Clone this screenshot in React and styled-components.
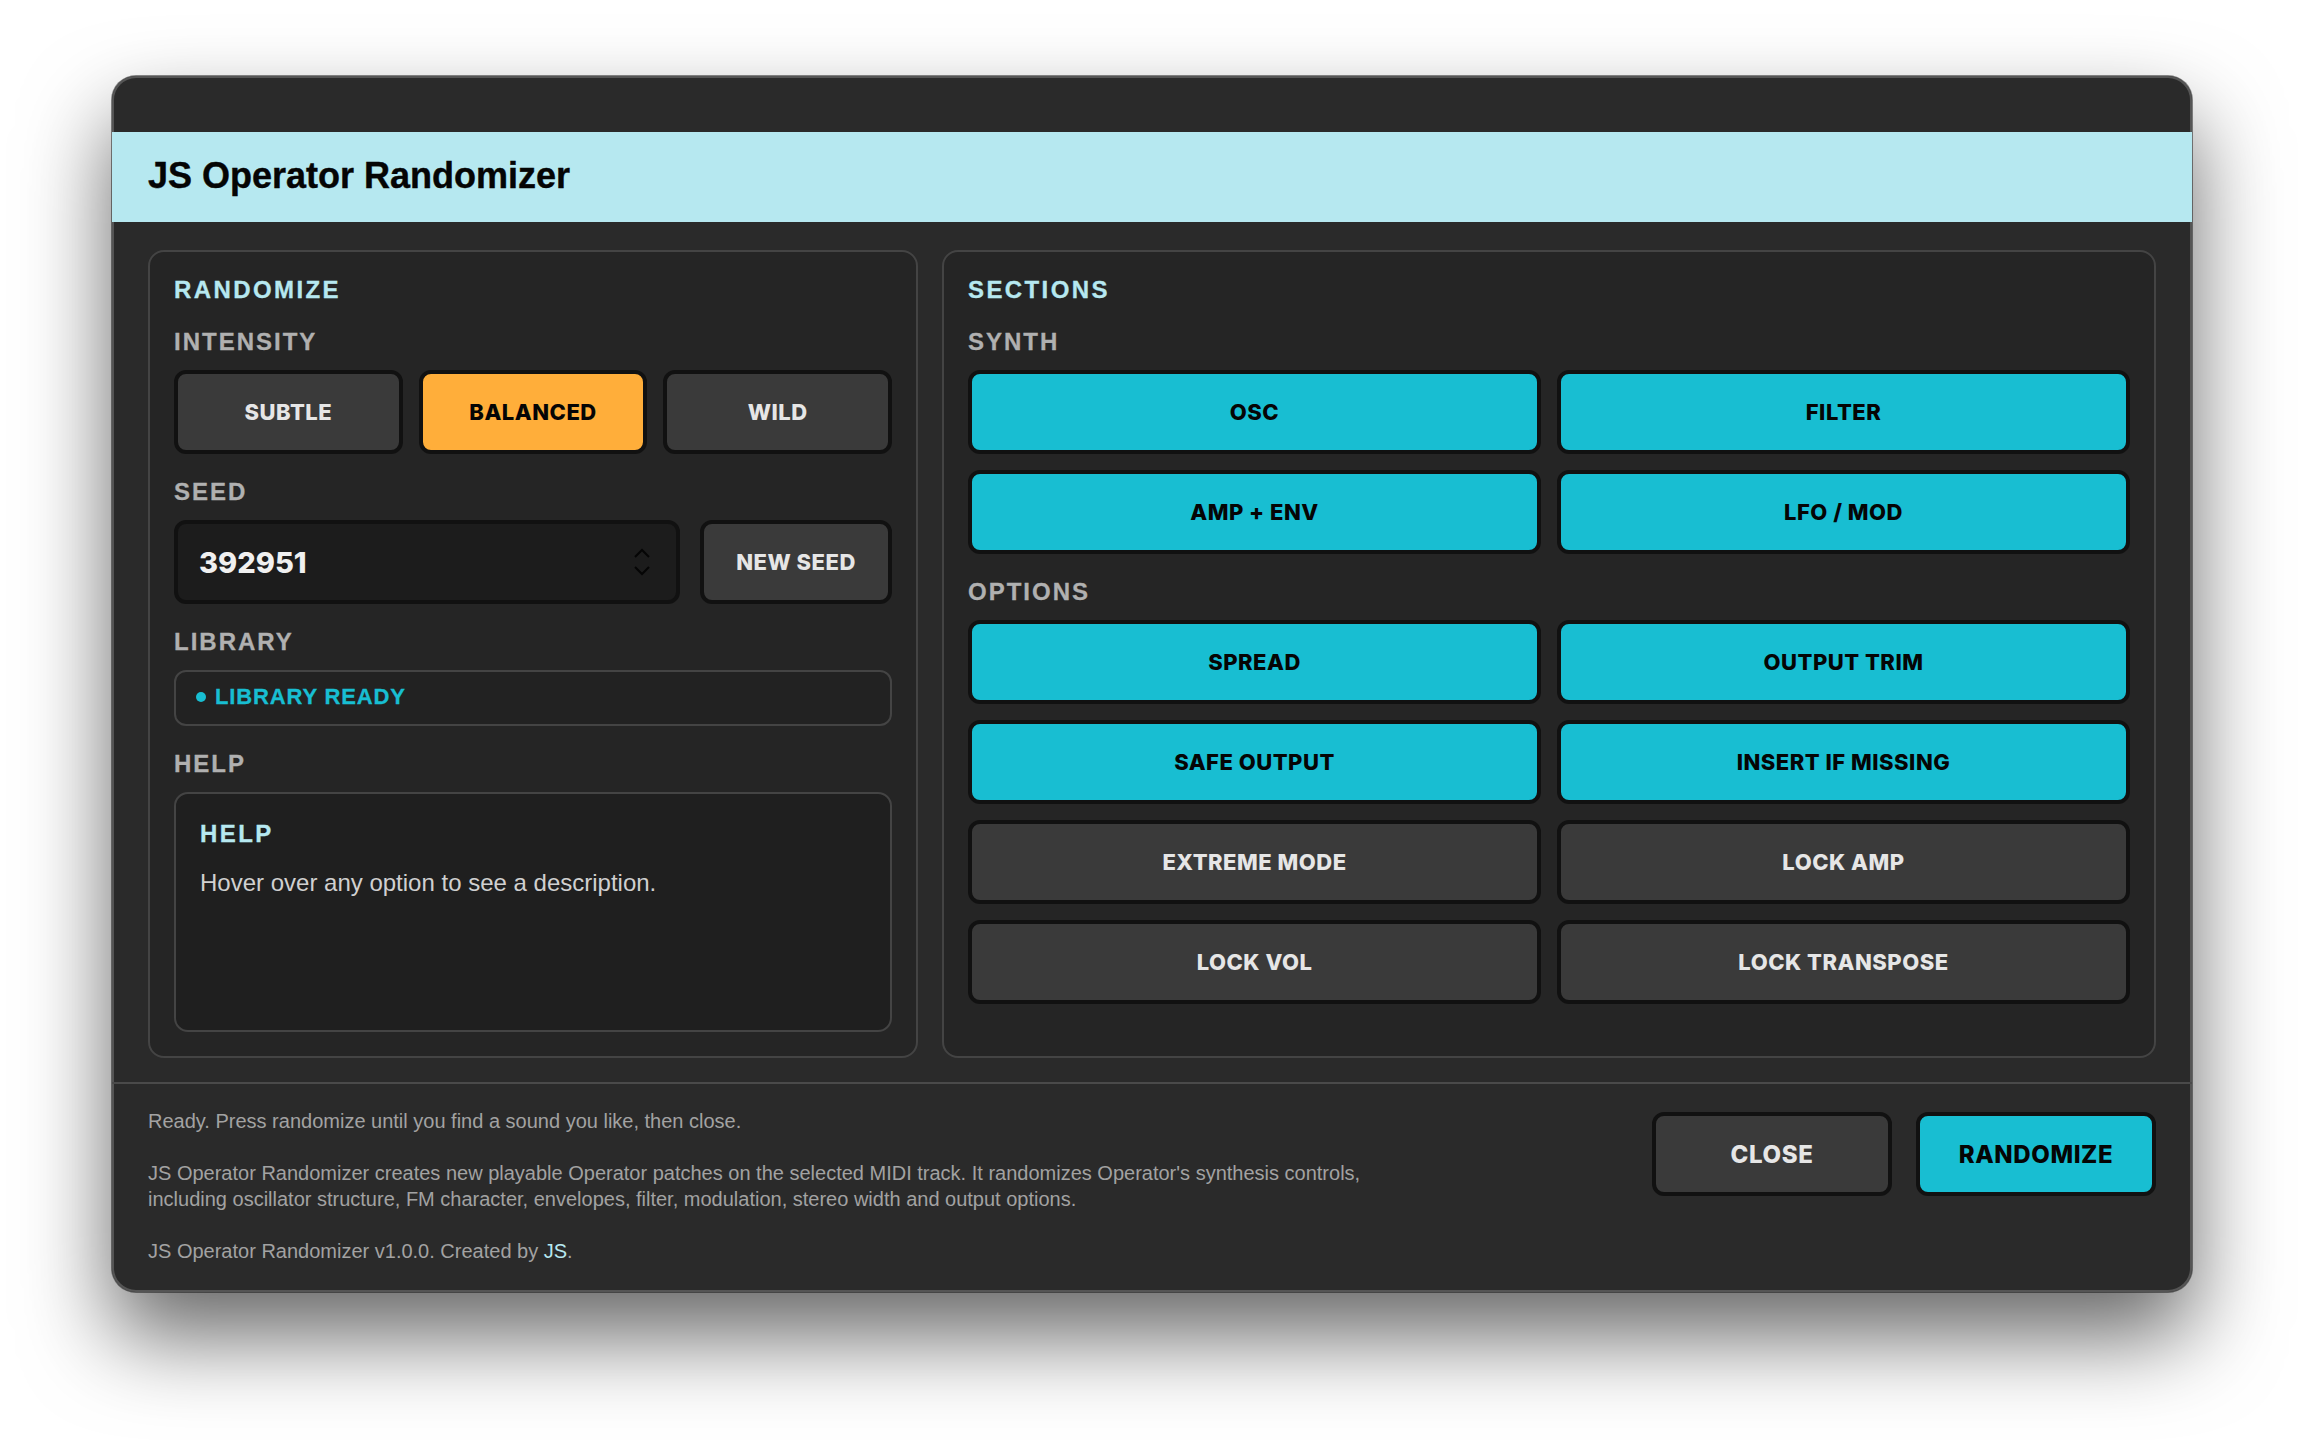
import React from 'react';
import styled, { createGlobalStyle } from 'styled-components';

const sections = ['OSC', 'FILTER', 'AMP + ENV', 'LFO / MOD'];
const options = [
  { name: 'SPREAD', on: true },
  { name: 'OUTPUT TRIM', on: true },
  { name: 'SAFE OUTPUT', on: true },
  { name: 'INSERT IF MISSING', on: true },
  { name: 'EXTREME MODE' },
  { name: 'LOCK AMP' },
  { name: 'LOCK VOL' },
  { name: 'LOCK TRANSPOSE' },
];

function App() {
  return (
    <>
      <GlobalStyle />
      <Page>
        <Window>
          <TitleStrip />
          <Header>JS Operator Randomizer</Header>
          <Body>
            <Panel>
              <PanelTitle>RANDOMIZE</PanelTitle>
              <Label>INTENSITY</Label>
              <IntensityRow>
                <ToggleButton>SUBTLE</ToggleButton>
                <ToggleButton $variant="orange">BALANCED</ToggleButton>
                <ToggleButton>WILD</ToggleButton>
              </IntensityRow>
              <Label>SEED</Label>
              <SeedRow>
                <SeedInput>
                  <span>392951</span>
                  <Spinner viewBox="0 0 16 28" fill="none">
                    <path d="M1 9l7-7 7 7M1 19l7 7 7-7" stroke="#050505" strokeWidth="2" />
                  </Spinner>
                </SeedInput>
                <ToggleButton>NEW SEED</ToggleButton>
              </SeedRow>
              <Label>LIBRARY</Label>
              <Status>
                <Dot />
                LIBRARY READY
              </Status>
              <Label>HELP</Label>
              <HelpBox>
                <HelpTitle>HELP</HelpTitle>
                <HelpText>Hover over any option to see a description.</HelpText>
              </HelpBox>
            </Panel>
            <Panel>
              <PanelTitle>SECTIONS</PanelTitle>
              <Label>SYNTH</Label>
              <ToggleGrid>
                {sections.map((name) => (
                  <ToggleButton key={name} $variant="cyan">
                    {name}
                  </ToggleButton>
                ))}
              </ToggleGrid>
              <Label>OPTIONS</Label>
              <ToggleGrid>
                {options.map((o) => (
                  <ToggleButton key={o.name} $variant={o.on ? 'cyan' : undefined}>
                    {o.name}
                  </ToggleButton>
                ))}
              </ToggleGrid>
            </Panel>
          </Body>
          <Footer>
            <FooterText>
              <FooterLine>Ready. Press randomize until you find a sound you like, then close.</FooterLine>
              <FooterLine>
                JS Operator Randomizer creates new playable Operator patches on the selected MIDI track. It
                randomizes Operator's synthesis controls, including oscillator structure, FM character, envelopes,
                filter, modulation, stereo width and output options.
              </FooterLine>
              <FooterLine>
                JS Operator Randomizer v1.0.0. Created by <FooterLink>JS</FooterLink>.
              </FooterLine>
            </FooterText>
            <FooterButtons>
              <FooterButton>CLOSE</FooterButton>
              <FooterButton $variant="cyan">RANDOMIZE</FooterButton>
            </FooterButtons>
          </Footer>
        </Window>
      </Page>
    </>
  );
}

export default App;

const GlobalStyle = createGlobalStyle`
  html, body {
    margin: 0;
    padding: 0;
    background: #fff;
  }
  * {
    box-sizing: border-box;
  }
`;

const Page = styled.div`
  width: 2304px;
  height: 1440px;
  padding: 76px 112px 148px;
  background: #fff;
  overflow: hidden;
`;

const Window = styled.div`
  display: flex;
  flex-direction: column;
  height: 1216px;
  background: #2a2a2a;
  border-radius: 24px;
  overflow: hidden;
  box-shadow: inset 0 0 0 2px #555, 0 0 0 1px rgba(0, 0, 0, 0.45), 0 44px 88px rgba(0, 0, 0, 0.6);
`;

const TitleStrip = styled.div`
  height: 56px;
  flex: none;
`;

const Header = styled.div`
  display: flex;
  align-items: center;
  height: 90px;
  flex: none;
  padding: 0 0 3px 36px;
  background: #b6e8f0;
  color: #050505;
  font: 700 36px 'Liberation Sans', Arial, sans-serif;
  -webkit-text-stroke: 0.4px #050505;
`;

const Body = styled.div`
  display: grid;
  grid-template-columns: 770px 1214px;
  gap: 24px;
  padding: 28px 36px 24px;
  height: 860px;
  flex: none;
`;

const Panel = styled.section`
  display: flex;
  flex-direction: column;
  padding: 24px;
  background: #252525;
  border: 2px solid #444;
  border-radius: 16px;
`;

const PanelTitle = styled.div`
  height: 26px;
  margin-bottom: 26px;
  color: #b6e8f0;
  font: 700 24px/28px 'Liberation Sans', Arial, sans-serif;
  letter-spacing: 2.4px;
  -webkit-text-stroke: 0.3px #b6e8f0;
`;

const Label = styled.div`
  height: 26px;
  margin-bottom: 16px;
  color: #b0b0b0;
  font: 700 24px/28px 'Liberation Sans', Arial, sans-serif;
  letter-spacing: 2px;
  -webkit-text-stroke: 0.3px #b0b0b0;
`;

const IntensityRow = styled.div`
  display: grid;
  grid-template-columns: repeat(3, 1fr);
  gap: 16px;
  margin-bottom: 24px;
`;

const ToggleButton = styled.div`
  display: flex;
  align-items: center;
  justify-content: center;
  height: 84px;
  border: 4px solid #111;
  border-radius: 12px;
  background: ${(p) => (p.$variant === 'cyan' ? '#18bed2' : p.$variant === 'orange' ? '#ffae3a' : '#3a3a3a')};
  color: ${(p) => (p.$variant ? '#050505' : '#e6e6e6')};
  font: 800 22px Inter, sans-serif;
  letter-spacing: 0.5px;
`;

const SeedRow = styled.div`
  display: grid;
  grid-template-columns: 506px 192px;
  gap: 20px;
  margin-bottom: 24px;
`;

const SeedInput = styled.div`
  display: flex;
  align-items: center;
  justify-content: space-between;
  height: 84px;
  padding: 0 26px 0 21px;
  background: #1c1c1c;
  border: 4px solid #111;
  border-radius: 12px;
  color: #f0f0f0;
  font: 800 29px Inter, sans-serif;
`;

const Spinner = styled.svg`
  width: 16px;
  height: 28px;
`;

const Status = styled.div`
  display: flex;
  align-items: center;
  gap: 9px;
  height: 56px;
  margin-bottom: 24px;
  padding: 0 0 2px 20px;
  background: #222;
  border: 2px solid #444;
  border-radius: 12px;
  color: #18bed2;
  font: 700 22px 'Liberation Sans', Arial, sans-serif;
  letter-spacing: 0.85px;
  -webkit-text-stroke: 0.3px #18bed2;
`;

const Dot = styled.span`
  width: 10px;
  height: 10px;
  border-radius: 50%;
  background: #18bed2;
`;

const HelpBox = styled.div`
  flex: 1;
  padding: 27px 24px 24px;
  background: #1f1f1f;
  border: 2px solid #444;
  border-radius: 14px;
`;

const HelpTitle = styled.div`
  margin-bottom: 21px;
  color: #b6e8f0;
  font: 700 24px/26px 'Liberation Sans', Arial, sans-serif;
  letter-spacing: 2.4px;
  -webkit-text-stroke: 0.3px #b6e8f0;
`;

const HelpText = styled.div`
  color: #d0d0d0;
  font: 400 24px/30px 'Liberation Sans', Arial, sans-serif;
`;

const ToggleGrid = styled.div`
  display: grid;
  grid-template-columns: repeat(2, 1fr);
  gap: 16px;
  margin-bottom: 24px;
`;

const Footer = styled.div`
  display: flex;
  justify-content: space-between;
  flex: 1;
  padding: 24px 36px 0;
  border-top: 2px solid #4a4a4a;
`;

const FooterText = styled.div`
  width: 1240px;
`;

const FooterLine = styled.p`
  margin: 0 0 26px;
  color: #a2a2a2;
  font: 400 20px/26px 'Liberation Sans', Arial, sans-serif;
`;

const FooterLink = styled.span`
  color: #b6e8f0;
`;

const FooterButtons = styled.div`
  display: grid;
  grid-template-columns: 240px 240px;
  gap: 24px;
  align-self: flex-start;
  margin-top: 4px;
`;

const FooterButton = styled(ToggleButton)`
  font-size: 24px;
  letter-spacing: 0.6px;
`;
